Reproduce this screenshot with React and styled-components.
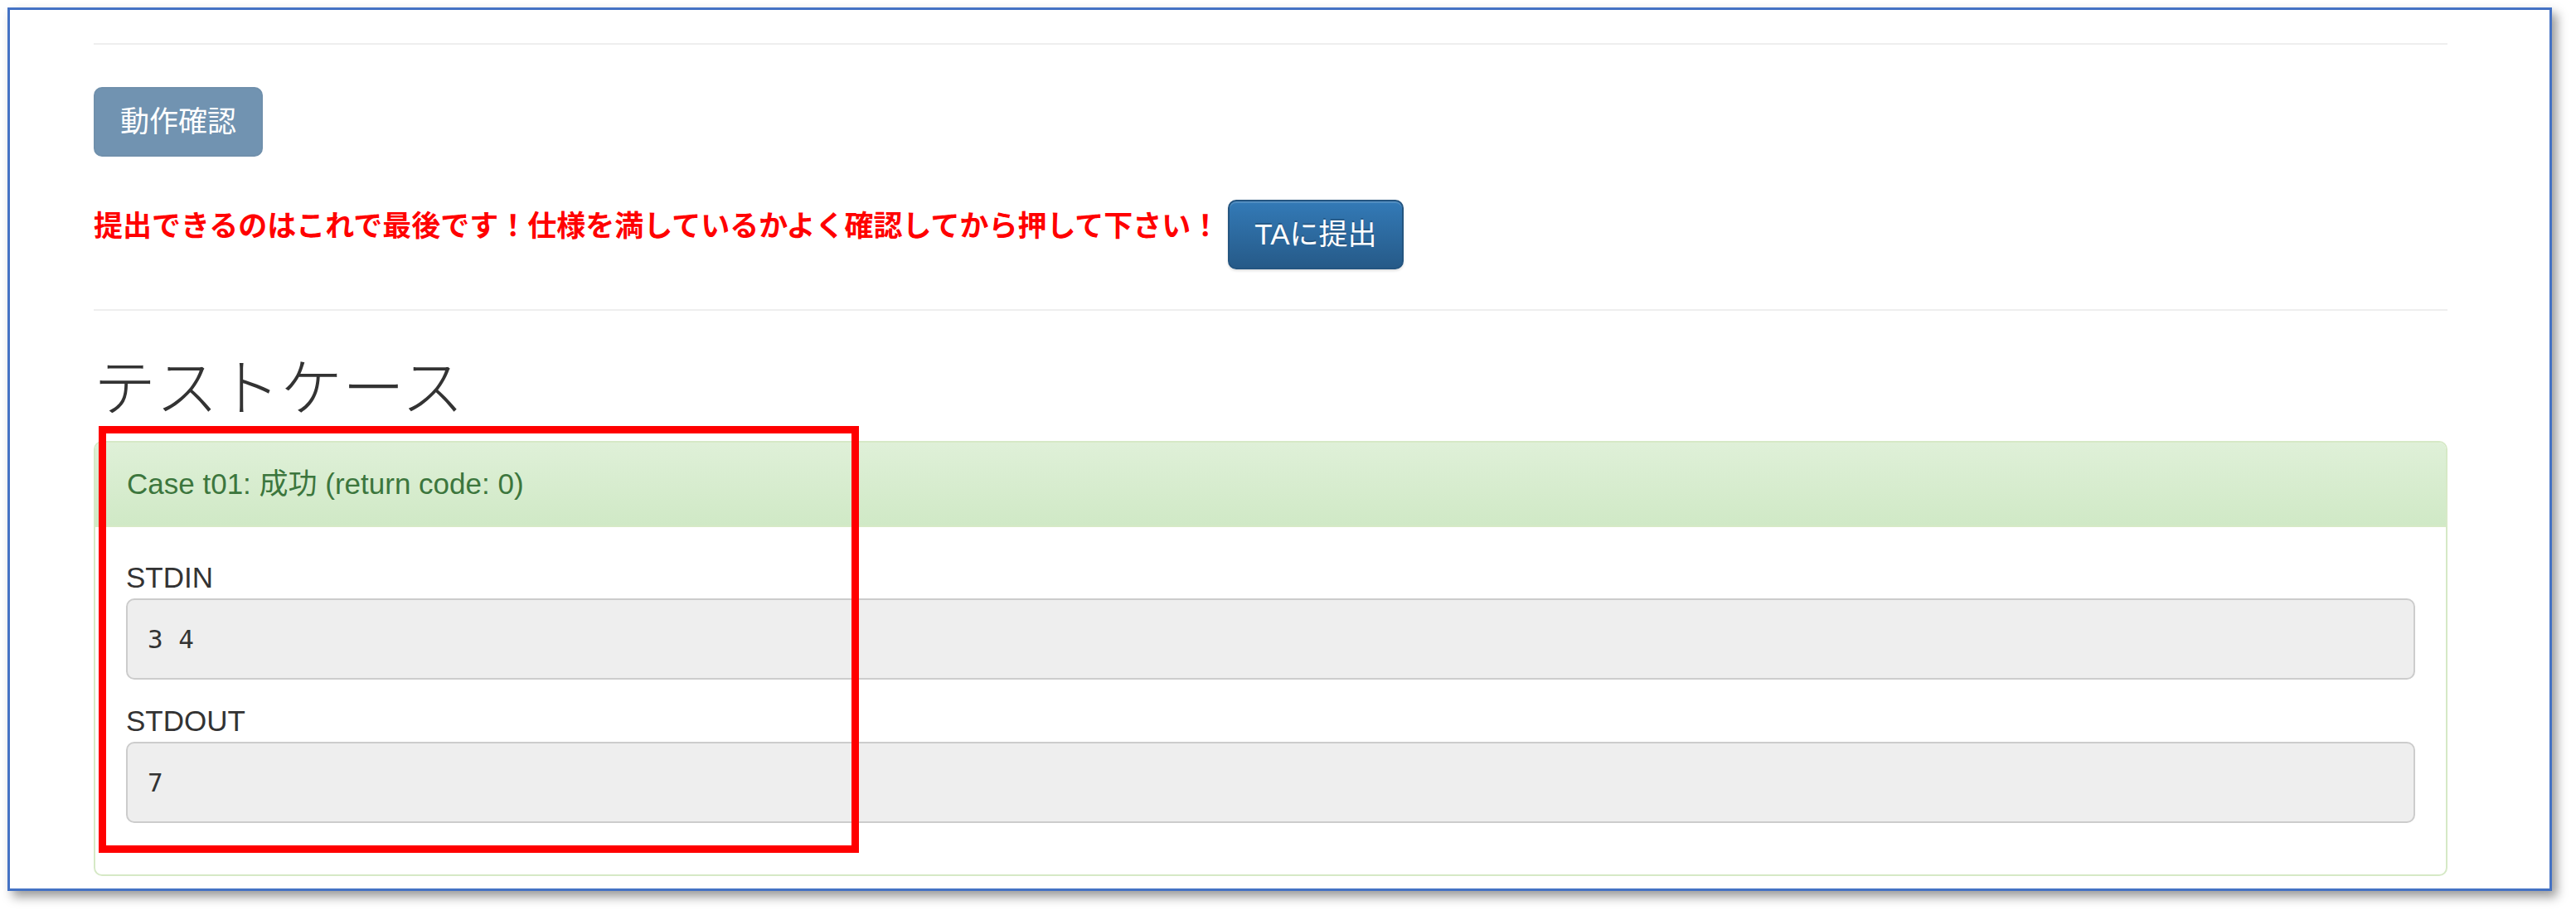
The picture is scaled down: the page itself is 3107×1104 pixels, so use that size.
import React from 'react';
import styled, { createGlobalStyle, css } from 'styled-components';

const GlobalStyle = createGlobalStyle`
    html, body {
        margin: 0;
        padding: 0;
        background: #ffffff;
    }
    * {
        box-sizing: border-box;
    }
`;

const Page = styled.div`
    width: 3107px;
    height: 1104px;
    padding: 9px 0 0 9px;
    background: #ffffff;
`;

/* the framed screenshot with its drop shadow */
const Frame = styled.div`
    position: relative;
    width: 3069px;
    height: 1066px;
    border: 3px solid #4472c4;
    background: #ffffff;
    box-shadow: 6px 7px 12px rgba(0, 0, 0, 0.4);
    padding: 40px 123px 0 101px;
    overflow: hidden;
    font-family: "Liberation Sans", Arial, "Noto Sans CJK JP", sans-serif;
    font-size: 35px;
    line-height: 50px;
    color: #333333;
`;

const Rule = styled.hr`
    margin: ${({ $top }) => $top || 0}px 0 ${({ $bottom }) => $bottom || 0}px;
    border: 0;
    border-top: 2px solid #eeeeee;
    height: 0;
`;

const Button = styled.button`
    display: inline-block;
    padding: 15px 30px;
    font-family: "Liberation Sans", Arial, "Noto Sans CJK JP", sans-serif;
    font-size: 35px;
    line-height: 50px;
    color: #ffffff;
    border: 2px solid #245580;
    border-radius: 10px;
    cursor: pointer;
    white-space: nowrap;

    ${({ $disabled }) => $disabled
        ? css`
            background: #265a88;
            opacity: 0.65;
            cursor: not-allowed;
        `
        : css`
            background: linear-gradient(to bottom, #337ab7 0%, #265a88 100%);
            text-shadow: 0 -2px 0 rgba(0, 0, 0, 0.2);
            box-shadow: inset 0 2px 0 rgba(255, 255, 255, 0.15), 0 2px 3px rgba(0, 0, 0, 0.12);
        `}
`;

const CheckRow = styled.div`
    display: flex;
    margin-bottom: 52px;
`;

const SubmitRow = styled.div`
    display: flex;
    align-items: center;
    gap: 10px;
`;

const Warning = styled.span`
    padding-bottom: 26px;
    font-family: "Noto Sans CJK JP", sans-serif;
    font-weight: 700;
    color: #ff0000;
`;

const Title = styled.h2`
    margin: 0 0 31px;
    font-family: "Noto Sans CJK JP", sans-serif;
    font-size: 75px;
    font-weight: 300;
    line-height: 76px;
    color: #333333;
`;

const Panel = styled.div`
    border: 2px solid #d6e9c6;
    border-radius: 10px;
    background: #ffffff;
    overflow: hidden;
`;

const PanelHeading = styled.div`
    padding: 25px 38px;
    background: linear-gradient(to bottom, #dff0d8 0%, #d0e9c6 100%);
    border-bottom: 2px solid #d6e9c6;
    color: #3c763d;
`;

const PanelBody = styled.div`
    padding: 36px 37px 37px;
`;

const FieldLabel = styled.div`
    line-height: 50px;
`;

const Output = styled.pre`
    margin: 0 0 25px;
    padding: 24px;
    font-family: "DejaVu Sans Mono", "Liberation Mono", monospace;
    font-size: 31px;
    line-height: 46px;
    color: #333333;
    background: #eeeeee;
    border: 2px solid #cccccc;
    border-radius: 10px;
`;

/* red annotation drawn over the screenshot */
const Annotation = styled.div`
    position: absolute;
    left: 107px;
    top: 502px;
    width: 917px;
    height: 515px;
    border: 9px solid #ff0000;
    pointer-events: none;
`;

const cases = [
    { name: 't01', result: '成功', code: 0, stdin: '3 4', stdout: '7' },
];

const App = () => {
    return (
        <Page>
            <GlobalStyle />
            <Frame>
                <Rule $bottom={51} />
                <CheckRow>
                    <Button $disabled disabled>動作確認</Button>
                </CheckRow>
                <SubmitRow>
                    <Warning>提出できるのはこれで最後です！仕様を満しているかよく確認してから押して下さい！</Warning>
                    <Button>TAに提出</Button>
                </SubmitRow>
                <Rule $top={48} $bottom={50} />
                <Title>テストケース</Title>
                {cases.map((c) => (
                    <Panel key={c.name}>
                        <PanelHeading>
                            Case {c.name}: {c.result} (return code: {c.code})
                        </PanelHeading>
                        <PanelBody>
                            <FieldLabel>STDIN</FieldLabel>
                            <Output>{c.stdin}</Output>
                            <FieldLabel>STDOUT</FieldLabel>
                            <Output>{c.stdout}</Output>
                        </PanelBody>
                    </Panel>
                ))}
                <Annotation />
            </Frame>
        </Page>
    );
};

export default App;
